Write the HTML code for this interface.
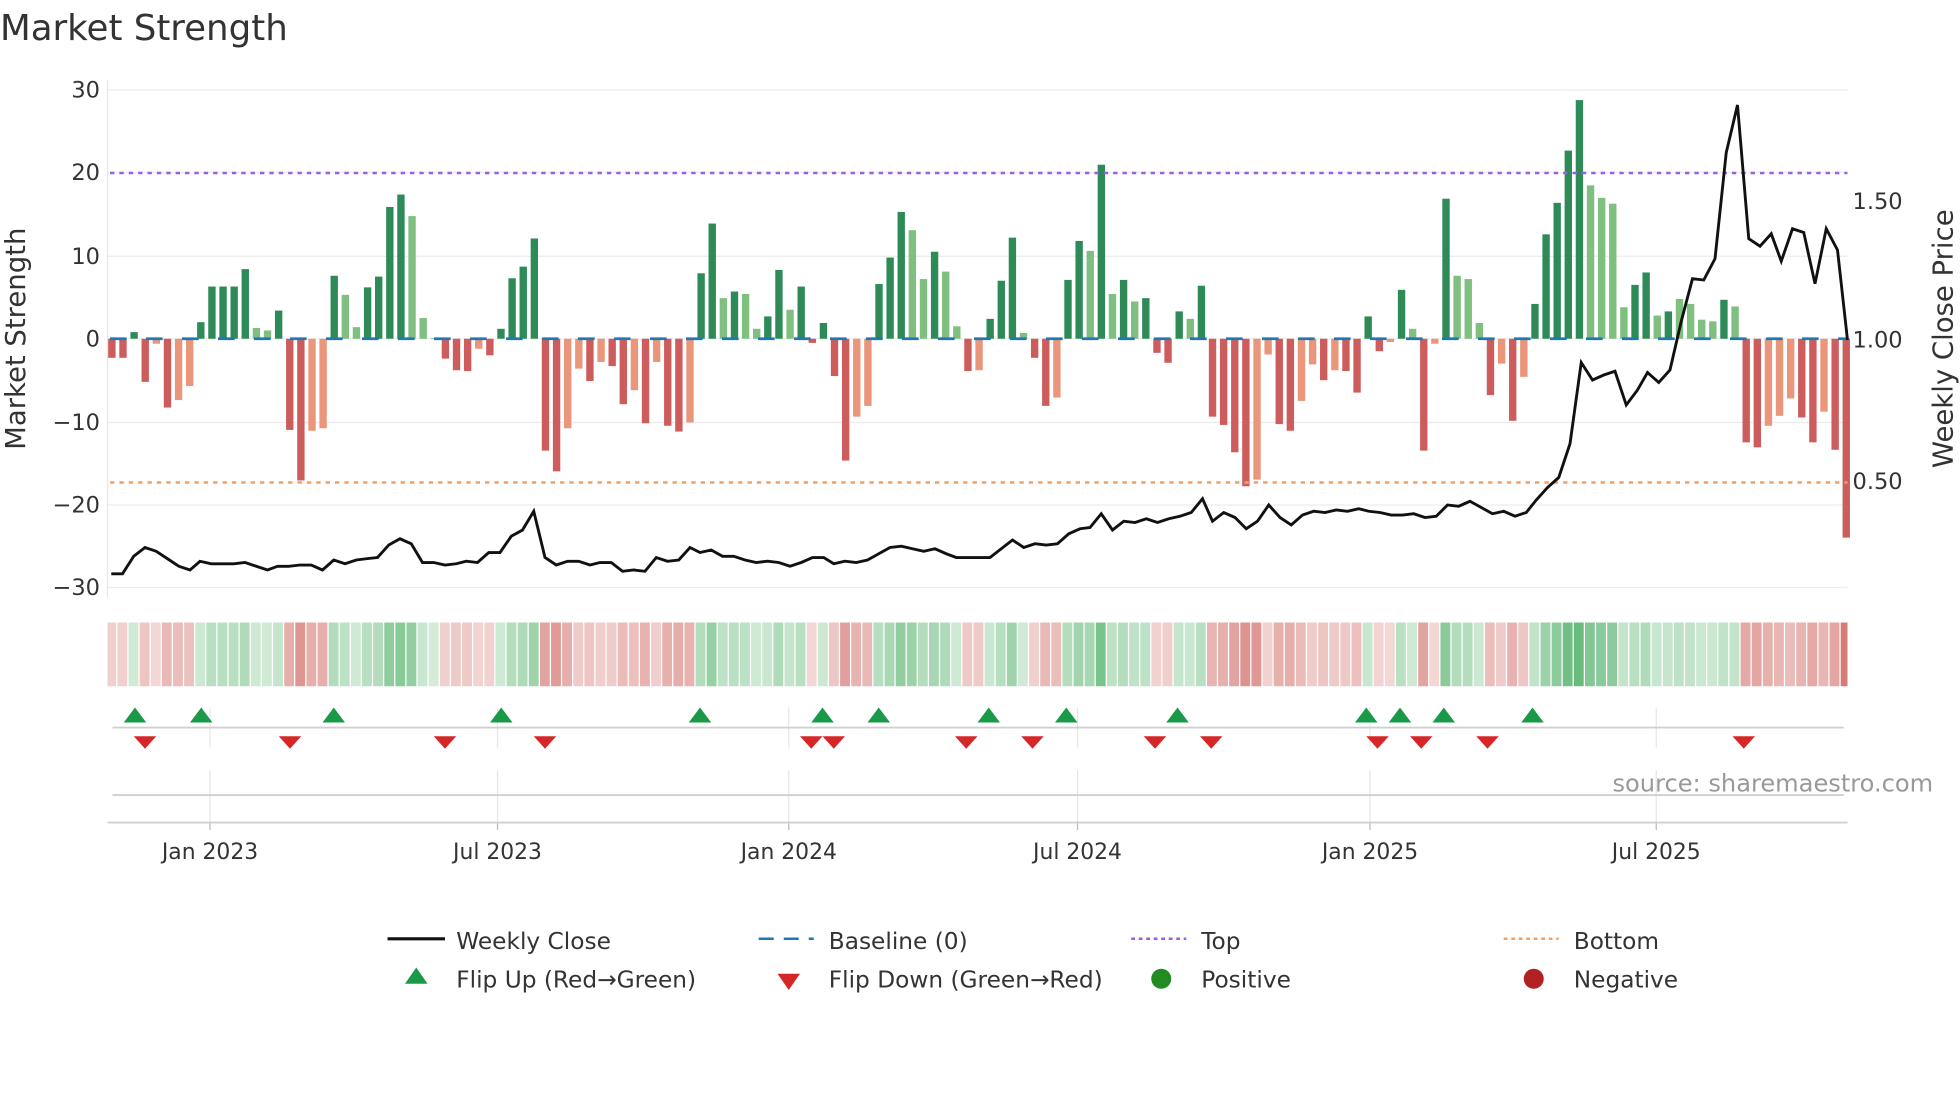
<!DOCTYPE html>
<html><head><meta charset="utf-8"><style>
html,body{margin:0;padding:0;background:#fff;width:1960px;height:1102px;overflow:hidden}
svg{display:block;font-family:"DejaVu Sans","Liberation Sans",sans-serif}
</style></head><body>
<svg id="s" width="1960" height="1102" viewBox="0 0 1568 881.6" xmlns="http://www.w3.org/2000/svg">
<rect width="1568" height="882" fill="#fff"/>
<text x="0" y="32" font-size="28.5" fill="#333">Market Strength</text>
<g id="grid" stroke="#ececec" stroke-width="1"></g>
<line x1="86" y1="64" x2="86" y2="478" stroke="#e6e6e6"/>
<g font-size="18" fill="#333" text-anchor="end">
<text x="80" y="78">30</text><text x="80" y="144">20</text><text x="80" y="211">10</text><text x="80" y="277">0</text>
<text x="80" y="344">−10</text><text x="80" y="410">−20</text><text x="80" y="476">−30</text>
</g>
<g font-size="18" fill="#333">
<text x="1482" y="167">1.50</text><text x="1482" y="278">1.00</text><text x="1482" y="391">0.50</text>
</g>
<text transform="translate(20,271) rotate(-90)" font-size="22" fill="#333" text-anchor="middle">Market Strength</text>
<text transform="translate(1562,271) rotate(-90)" font-size="22" fill="#333" text-anchor="middle">Weekly Close Price</text>
<g id="bars"></g>
<line x1="88" y1="271" x2="1478" y2="271" stroke="#1f77b4" stroke-width="2.2" stroke-dasharray="13.3 15.5"/>
<line x1="88" y1="138.4" x2="1478" y2="138.4" stroke="#9b5de5" stroke-width="2" stroke-dasharray="3.5 4"/>
<line x1="88" y1="386" x2="1478" y2="386" stroke="#f0a060" stroke-width="2" stroke-dasharray="3.5 4"/>
<polyline id="price" fill="none" stroke="#111" stroke-width="2.3" stroke-linejoin="miter"/>
<g id="heat"></g>
<g id="vg" stroke="#e6e6e6"></g>
<line x1="90" y1="582" x2="1475" y2="582" stroke="#d0d0d0" stroke-width="1.5"/>
<line x1="90" y1="636" x2="1475" y2="636" stroke="#d0d0d0" stroke-width="1.5"/>
<line x1="86" y1="658" x2="1478" y2="658" stroke="#d0d0d0" stroke-width="1.5"/>
<g id="marks"></g>
<text x="1290" y="633" font-size="19.3" fill="#999">source: sharemaestro.com</text>
<g font-size="17.5" fill="#333" text-anchor="middle">
<text x="168" y="687">Jan 2023</text><text x="398" y="687">Jul 2023</text><text x="631" y="687">Jan 2024</text>
<text x="862" y="687">Jul 2024</text><text x="1096" y="687">Jan 2025</text><text x="1325" y="687">Jul 2025</text>
</g>
<g font-size="18.6" fill="#333">
<line x1="310" y1="751" x2="356" y2="751" stroke="#111" stroke-width="2.5"/>
<text x="365" y="759">Weekly Close</text>
<line x1="607" y1="751" x2="651" y2="751" stroke="#1f77b4" stroke-width="2" stroke-dasharray="12 8"/>
<text x="663" y="759">Baseline (0)</text>
<line x1="905" y1="751" x2="949" y2="751" stroke="#9b5de5" stroke-width="2" stroke-dasharray="3 3"/>
<text x="961" y="759">Top</text>
<line x1="1203" y1="751" x2="1247" y2="751" stroke="#f0a060" stroke-width="2" stroke-dasharray="3 3"/>
<text x="1259" y="759">Bottom</text>
<polygon points="333,774 324,787 342,787" fill="#1a9a48"/>
<text x="365" y="790">Flip Up (Red→Green)</text>
<polygon points="622,779 640,779 631,792" fill="#d62728"/>
<text x="663" y="790">Flip Down (Green→Red)</text>
<circle cx="929" cy="783" r="8" fill="#228b22"/>
<text x="961" y="790">Positive</text>
<circle cx="1227" cy="783" r="8" fill="#b22222"/>
<text x="1259" y="790">Negative</text>
</g>
</svg>
<script>
var NS="http://www.w3.org/2000/svg";
function el(p,t,a){var e=document.createElementNS(NS,t);for(var k in a)e.setAttribute(k,a[k]);p.appendChild(e);return e;}
var g=document.getElementById('grid');
[72,138,205,271,338,404,470].forEach(function(y){el(g,'line',{x1:86,y1:y,x2:1478,y2:y});});
var V="-2.3r -2.3r 0.8d -5.2r -0.6o -8.3r -7.4o -5.7o 2d 6.3d 6.3d 6.3d 8.4d 1.3l 1l 3.4d -11r -17.1r -11.1o -10.8o 7.6d 5.3l 1.4l 6.2d 7.5d 15.9d 17.4d 14.8l 2.5l 0.1l -2.4r -3.8r -3.9r -1.2o -2r 1.2d 7.3d 8.7d 12.1d -13.5r -16r -10.8o -3.6o -5.1r -2.8o -3.3r -7.9r -6.2o -10.2r -2.8o -10.5r -11.2r -10.1o 7.9d 13.9d 4.9l 5.7d 5.4l 1.2l 2.7d 8.3d 3.5l 6.3d -0.5r 1.9d -4.5r -14.7r -9.4o -8.1o 6.6d 9.8d 15.3d 13.1l 7.2l 10.5d 8.1l 1.5l -3.9r -3.8o 2.4d 7d 12.2d 0.7l -2.3r -8.1r -7.1o 7.1d 11.8d 10.6l 21d 5.4l 7.1d 4.5l 4.9d -1.7r -2.9r 3.3d 2.4l 6.4d -9.4r -10.4r -13.7r -17.8r -17o -1.9o -10.3r -11.1r -7.5o -3.1o -5r -3.8o -3.9r -6.5r 2.7d -1.5r -0.4o 5.9d 1.2l -13.5r -0.6o 16.9d 7.6l 7.2l 1.9l -6.8r -3o -9.9r -4.6o 4.2d 12.6d 16.4d 22.7d 28.8d 18.5l 17l 16.3l 3.8l 6.5d 8d 2.8l 3.3d 4.8l 4.2l 2.3l 2.1l 4.7d 3.9l -12.5r -13.1r -10.5o -9.3o -7.2o -9.5r -12.5r -8.8o -13.4r -24r".split(" ");
var C={d:"#2e8b57",l:"#7fbf7f",r:"#cd5c5c",o:"#e9967a"};
var b=document.getElementById('bars'),h=document.getElementById('heat');
var n=V.length,step=(1477-89.5)/(n-1);
V.forEach(function(s,i){var v=parseFloat(s),c=s.slice(-1),x=89.5+i*step;var hh=Math.abs(v)*6.63;
el(b,'rect',{x:(x-2.95).toFixed(2),y:(v>0?271-hh:271).toFixed(2),width:5.9,height:hh.toFixed(2),fill:C[c]});
var a=0.22+0.55*Math.min(Math.abs(v)/25,1);
var x0=Math.max(86,x-4.45),x1=Math.min(1478,x-4.45+step-1);
el(h,'rect',{x:x0.toFixed(2),y:498,width:(x1-x0).toFixed(2),height:51,fill:v>0?"#3aa655":"#c8504a","fill-opacity":a.toFixed(2)});});
var P="89,459 98,459 107,445 116,438 125,441 134,447 143,453 152,456 160,449 169,451 178,451 187,451 196,450 205,453 214,456 222,453 231,453 240,452 249,452 258,456 267,448 276,451 285,448 293,447 302,446 311,436 320,431 329,435 338,450 347,450 356,452 365,451 373,449 382,450 391,442 400,442 409,429 418,424 427,409 436,446 445,452 454,449 463,449 472,452 480,450 489,450 498,457 507,456 516,457 525,446 534,449 543,448 552,438 560,442 569,440 578,445 587,445 596,448 605,450 614,449 623,450 632,453 641,450 650,446 659,446 667,451 676,449 685,450 694,448 703,443 712,438 721,437 730,439 739,441 748,439 757,443 765,446 774,446 783,446 792,446 801,439 810,432 819,438 828,435 837,436 846,435 855,427 864,423 872,422 881,411 890,424 899,417 908,418 917,415 926,418 935,415 944,413 953,410 962,399 970,417 979,410 988,414 997,423 1006,417 1015,404 1024,414 1033,420 1042,412 1051,409 1060,410 1069,408 1078,409 1087,407 1095,409 1104,410 1113,412 1122,412 1131,411 1140,414 1149,413 1158,404 1167,405 1176,401 1185,406 1194,411 1203,409 1212,413 1221,410 1229,400 1238,390 1247,382 1256,355 1265,290 1274,304 1283,300 1292,297 1301,324 1310,312 1318,298 1327,306 1336,296 1345,257 1354,223 1363,224 1372,207 1381,122 1390,84 1399,191 1408,197 1417,187 1425,209 1434,183 1443,186 1452,227 1461,183 1470,200 1478,272";
document.getElementById('price').setAttribute('points',P);
var vg=document.getElementById('vg');
[168,398,631,862,1096,1325].forEach(function(x){el(vg,'line',{x1:x,y1:566,x2:x,y2:598});el(vg,'line',{x1:x,y1:616,x2:x,y2:658});el(vg,'line',{x1:x,y1:658,x2:x,y2:664,stroke:"#bbb"});});
var m=document.getElementById('marks');
[108,161,267,401,560,658,703,791,853,942,1093,1120,1155,1226].forEach(function(x){el(m,'polygon',{points:x+",566 "+(x-9)+",578 "+(x+9)+",578",fill:"#1a9a48"});});
[116,232,356,436,649,667,773,826,924,969,1102,1137,1190,1395].forEach(function(x){el(m,'polygon',{points:(x-9)+",589 "+(x+9)+",589 "+x+",599",fill:"#d62728"});});
</script>
</body></html>
